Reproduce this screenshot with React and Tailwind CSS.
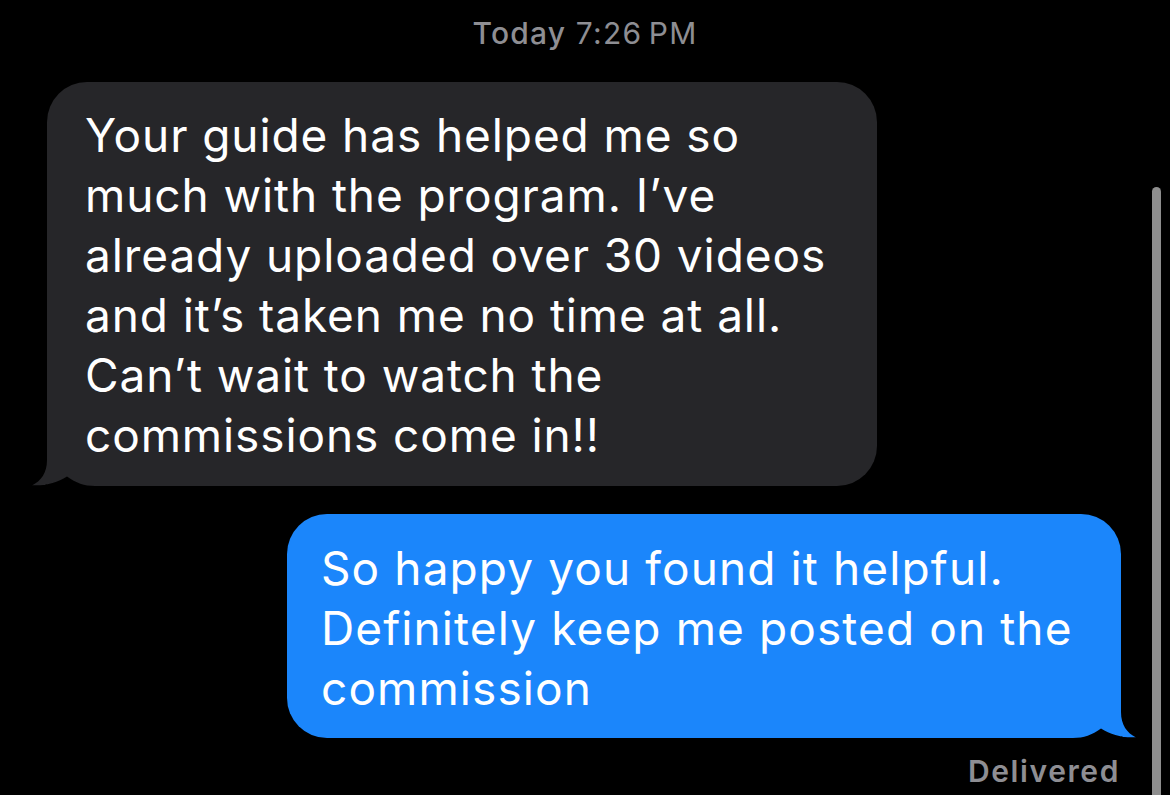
import React from "react";

const font = { fontFamily: "Inter, 'Noto Sans', 'Liberation Sans', sans-serif" };

export default function App() {
  const grayLines = [
    "Your guide has helped me so",
    "much with the program. I\u2019ve",
    "already uploaded over 30 videos",
    "and it\u2019s taken me no time at all.",
    "Can\u2019t wait to watch the",
    "commissions come in!!",
  ];
  const blueLines = [
    "So happy you found it helpful.",
    "Definitely keep me posted on the",
    "commission",
  ];
  return (
    <div
      className="relative w-[1170px] h-[795px] bg-black overflow-hidden flex flex-col"
      style={font}
    >
      <div className="pt-[15px] text-center text-[30px] leading-[36px] tracking-[1.2px] text-[#8e8e93]">
        <span className="font-medium">Today</span>
        <span> 7:26&#8201;PM</span>
      </div>

      <div className="relative mt-[31px] ml-[47px] w-[830px] bg-[#262629] rounded-[40px] rounded-bl-none pl-[38px] pr-[20px] pt-[23px] pb-[21px]">
        <svg
          className="absolute left-[-16px] bottom-0"
          width="64"
          height="50"
          viewBox="0 0 64 50"
        >
          <path d="M16 0 V24 C16 37 10 45 1 49.4 C14 50.5 26 46.5 36 40.5 C45 47 53 50 64 50 V0 Z" fill="#262629" />
          <path d="M1 49.4 C14 50.5 26 46.5 36 40.5 C45 47 53 50 64 50 L64 51 L0 51 Z" fill="#000" />
        </svg>
        <div className="relative text-white text-[46px] leading-[60px] tracking-[0.9px]">
          {grayLines.map((l, i) => (
            <div key={i} className="whitespace-nowrap">{l}</div>
          ))}
        </div>
      </div>

      <div className="relative mt-[28px] self-end mr-[49px] w-[834px] bg-[#1b86fb] rounded-[40px] rounded-br-none pl-[34px] pr-[20px] pt-[24px] pb-[20px]">
        <svg
          className="absolute right-[-16px] bottom-0"
          width="64"
          height="50"
          viewBox="0 0 64 50"
        >
          <g transform="translate(64 0) scale(-1 1)">
            <path d="M16 0 V24 C16 37 10 45 1 49.4 C14 50.5 26 46.5 36 40.5 C45 47 53 50 64 50 V0 Z" fill="#1b86fb" />
            <path d="M1 49.4 C14 50.5 26 46.5 36 40.5 C45 47 53 50 64 50 L64 51 L0 51 Z" fill="#000" />
          </g>
        </svg>
        <div className="relative text-white text-[46px] leading-[60px] tracking-[1.1px]">
          {blueLines.map((l, i) => (
            <div key={i} className="whitespace-nowrap">{l}</div>
          ))}
        </div>
      </div>

      <div className="mt-[15px] self-end mr-[50px] text-[30px] leading-[36px] font-semibold tracking-[1.6px] text-[#8e8e93]">
        Delivered
      </div>

      <div className="absolute right-[9px] top-[187px] bottom-0 w-[9px] rounded-t-full bg-[#8e8e8e]" />
    </div>
  );
}
